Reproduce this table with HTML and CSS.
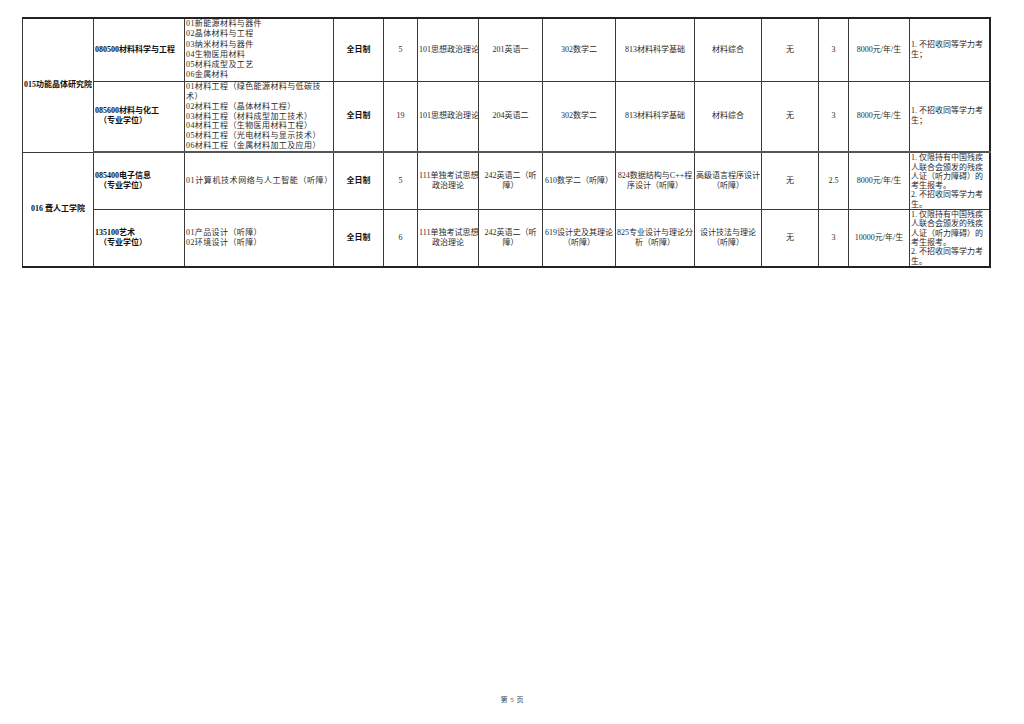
FILE: index.html
```html
<!DOCTYPE html>
<html lang="zh">
<head>
<meta charset="utf-8">
<link rel="stylesheet" href="styles.css">
</head>
<body>
<div class="page">
<table class="sheet">
<colgroup>
<col class="c1"><col class="c2"><col class="c3"><col class="c4"><col class="c5"><col class="c6"><col class="c7"><col class="c8"><col class="c9"><col class="c10"><col class="c11"><col class="c12"><col class="c13"><col class="c14">
</colgroup>
<tbody>
<tr class="r1">
<td rowspan="2" class="inst b">015功能晶体研究院</td>
<td class="major b">080500材料科学与工程</td>
<td class="dir">01新能源材料与器件<br>02晶体材料与工程<br>03纳米材料与器件<br>04生物医用材料<br>05材料成型及工艺<br>06金属材料</td>
<td class="b ctr">全日制</td>
<td class="ctr">5</td>
<td class="ctr">101思想政治理论</td>
<td class="ctr">201英语一</td>
<td class="ctr">302数学二</td>
<td class="ctr">813材料科学基础</td>
<td class="ctr">材料综合</td>
<td class="ctr">无</td>
<td class="ctr">3</td>
<td class="ctr">8000元/年/生</td>
<td class="note">1. 不招收同等学力考<br>生；</td>
</tr>
<tr class="r2 grp-end">
<td class="major b">085600材料与化工<br>&nbsp;&nbsp;（专业学位）</td>
<td class="dir dense">01材料工程（绿色能源材料与低碳技<br>术）<br>02材料工程（晶体材料工程）<br>03材料工程（材料成型加工技术）<br>04材料工程（生物医用材料工程）<br>05材料工程（光电材料与显示技术）<br>06材料工程（金属材料加工及应用）</td>
<td class="b ctr">全日制</td>
<td class="ctr">19</td>
<td class="ctr">101思想政治理论</td>
<td class="ctr">204英语二</td>
<td class="ctr">302数学二</td>
<td class="ctr">813材料科学基础</td>
<td class="ctr">材料综合</td>
<td class="ctr">无</td>
<td class="ctr">3</td>
<td class="ctr">8000元/年/生</td>
<td class="note">1. 不招收同等学力考<br>生；</td>
</tr>
<tr class="r3">
<td rowspan="2" class="inst b">016 聋人工学院</td>
<td class="major b">085400电子信息<br>&nbsp;&nbsp;（专业学位）</td>
<td class="dir spaced">01计算机技术网络与人工智能（听障）</td>
<td class="b ctr">全日制</td>
<td class="ctr">5</td>
<td class="ctr">111单独考试思想<br>政治理论</td>
<td class="ctr">242英语二（听<br>障）</td>
<td class="ctr">610数学二（听障）</td>
<td class="ctr">824数据结构与C++程<br>序设计（听障）</td>
<td class="ctr">高级语言程序设计<br>（听障）</td>
<td class="ctr">无</td>
<td class="ctr">2.5</td>
<td class="ctr">8000元/年/生</td>
<td class="note tight">1. 仅限持有中国残疾<br>人联合会颁发的残疾<br>人证（听力障碍）的<br>考生报考。<br>2. 不招收同等学力考<br>生。</td>
</tr>
<tr class="r4">
<td class="major b">135100艺术<br>&nbsp;&nbsp;（专业学位）</td>
<td class="dir">01产品设计（听障）<br>02环境设计（听障）</td>
<td class="b ctr">全日制</td>
<td class="ctr">6</td>
<td class="ctr">111单独考试思想<br>政治理论</td>
<td class="ctr">242英语二（听<br>障）</td>
<td class="ctr">619设计史及其理论<br>（听障）</td>
<td class="ctr">825专业设计与理论分<br>析（听障）</td>
<td class="ctr">设计技法与理论<br>（听障）</td>
<td class="ctr">无</td>
<td class="ctr">3</td>
<td class="ctr">10000元/年/生</td>
<td class="note tight">1. 仅限持有中国残疾<br>人联合会颁发的残疾<br>人证（听力障碍）的<br>考生报考。<br>2. 不招收同等学力考<br>生。</td>
</tr>
</tbody>
</table>
<footer class="pageno">第 5 页</footer>
</div>
</body>
</html>
```

FILE: styles.css
```css
html, body {
  margin: 0;
  padding: 0;
  background: #ffffff;
}

.page {
  width: 1024px;
  height: 724px;
  box-sizing: border-box;
  padding: 17px 35px 0 22px;
  display: flex;
  flex-direction: column;
  font-family: "Liberation Serif", "Noto Sans CJK SC", serif;
  color: #2a2a2a;
}

.sheet {
  width: 967px;
  table-layout: fixed;
  border-collapse: collapse;
  border: 2px solid #222;
  border-left-width: 1px;
  font-size: 8px;
  line-height: 10px;
}

.c1 { width: 71px; }
.c2 { width: 91px; }
.c3 { width: 149px; }
.c4 { width: 50px; }
.c5 { width: 34px; }
.c6 { width: 61px; }
.c7 { width: 64px; }
.c8 { width: 73px; }
.c9 { width: 79px; }
.c10 { width: 67px; }
.c11 { width: 57px; }
.c12 { width: 30px; }
.c13 { width: 61px; }
.c14 { width: 80px; }

.sheet td {
  border: 1px solid #3a3a3a;
  padding: 0 1px;
  vertical-align: middle;
  overflow: hidden;
  white-space: nowrap;
}

.r1 td { height: 61px; }
.r2 td { height: 69px; }
.r3 td { height: 56px; }
.r4 td { height: 54px; }

.grp-end td {
  border-bottom: 2px solid #555;
}

.b {
  font-weight: bold;
  color: #111;
}

.inst {
  text-align: center;
}

.major {
  text-align: left;
}

.dir {
  text-align: left;
  line-height: 10.3px;
  letter-spacing: 0.4px;
}

.dir.dense {
  line-height: 9.9px;
}

.dir.spaced {
  letter-spacing: 0.6px;
}

.ctr {
  text-align: center;
}

.note {
  text-align: left;
}

.note.tight {
  line-height: 9.3px;
}

.pageno {
  margin-top: auto;
  margin-left: -22px;
  margin-right: -35px;
  text-align: center;
  padding-bottom: 19px;
  font-size: 7px;
  line-height: 10px;
  color: #444;
  word-spacing: 1px;
}
```
